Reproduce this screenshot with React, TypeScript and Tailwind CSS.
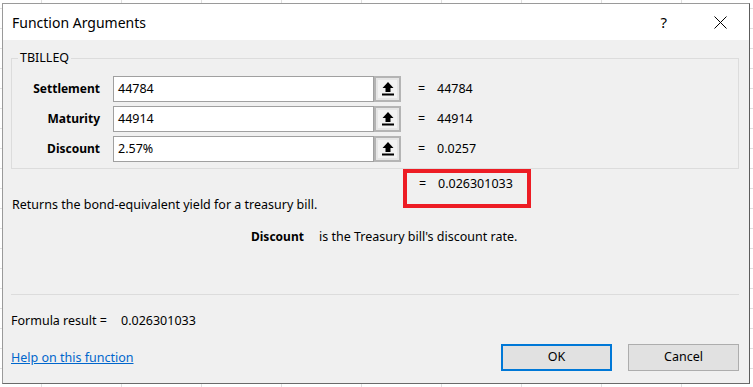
import React from "react";

const font = { fontFamily: '"Noto Sans", "Segoe UI", Arial, sans-serif' };

function UploadIcon() {
  return (
    <svg width="12" height="14" viewBox="0 0 12 14">
      <polygon points="6,0 0.5,6 3.5,6 3.5,10 8.5,10 8.5,6 11.5,6" fill="#000" />
      <rect x="0" y="11.5" width="12" height="2" fill="#000" />
    </svg>
  );
}

function ArgRow({ label, value, result }: { label: string; value: string; result: string }) {
  return (
    <div className="flex items-center h-[26px]">
      <div className="w-[88px] text-right font-bold text-[12px] text-black">{label}</div>
      <div className="ml-[13px] w-[261px] h-[26px] bg-white border border-[#a0a0a0] flex items-center pl-[4px] text-[12.5px] text-black">
        {value}
      </div>
      <div className="w-[27px] h-[26px] border-2 border-[#b4b4b4] bg-[#e6e6e6] flex items-center justify-center">
        <div className="w-[19px] h-[18px] bg-[#f3f3f3] flex items-center justify-center">
          <UploadIcon />
        </div>
      </div>
      <div className="ml-[17px] w-[19px] text-[12.5px] text-black">=</div>
      <div className="text-[12.5px] text-black">{result}</div>
    </div>
  );
}

export default function App() {
  return (
    <div
      className="w-[753px] h-[387px] overflow-hidden bg-white pt-[3px] pl-[2px] bg-[linear-gradient(to_right,#e0e0e0_1px,transparent_1px),linear-gradient(to_bottom,#e0e0e0_1px,transparent_1px)] bg-[size:80px_20px] bg-[position:41px_8px]"
      style={font}
    >
      <div className="w-[748px] h-[381px] border border-[#9a9a9a] border-r-[#5c5c5c] border-b-[#6a6a6a] bg-[#f0f0f0] flex flex-col">
        {/* Title bar */}
        <div className="h-[36px] bg-white flex items-center pl-[9px] shrink-0">
          <div className="text-[14px] text-black">Function Arguments</div>
          <div className="ml-auto text-[15px] text-black mr-[47px]">?</div>
          <div className="mr-[22px] flex items-center">
            <svg width="13" height="13" viewBox="0 0 13 13">
              <path d="M0.5 0.5 L12.5 12.5 M12.5 0.5 L0.5 12.5" stroke="#000" strokeWidth="1" />
            </svg>
          </div>
        </div>

        {/* Body */}
        <div className="flex-1 flex flex-col pl-[8px] pr-[10px]">
          {/* Group box */}
          <div className="relative mt-[18px] h-[111px] border border-[#dcdcdc] pt-[17px] flex flex-col gap-[4px]">
            <span className="absolute left-[6px] top-[-10px] px-[2px] bg-[#f0f0f0] text-[12.5px] text-black leading-[18px]">
              TBILLEQ
            </span>
            <ArgRow label="Settlement" value="44784" result="44784" />
            <ArgRow label="Maturity" value="44914" result="44914" />
            <ArgRow label="Discount" value="2.57%" result="0.0257" />
          </div>

          {/* Result row */}
          <div className="relative h-[24px] pt-[6px] flex items-center">
            <div className="ml-[408px] w-[19px] text-[12.5px] text-black leading-[18px]">=</div>
            <div className="text-[12.5px] text-black leading-[18px]">0.026301033</div>
            <div className="absolute left-[392px] top-0 w-[128px] h-[39px] border-4 border-[#ed1c24]" />
          </div>

          <div className="mt-[3px] text-[12.5px] text-black leading-[18px] pl-[1px]">
            Returns the bond-equivalent yield for a treasury bill.
          </div>

          <div className="mt-[14px] flex text-[12.5px] leading-[18px] text-black pl-[240px]">
            <span className="font-bold text-[12px] w-[68px]">Discount</span>
            <span>is the Treasury bill's discount rate.</span>
          </div>

          <div className="mt-[48px] h-px bg-[#dcdcdc]" />

          <div className="mt-[17px] flex text-[12.5px] leading-[18px] text-black">
            <span className="w-[110px]">Formula result =</span>
            <span>0.026301033</span>
          </div>

          <div className="mt-[14px] flex items-center">
            <a className="text-[12.5px] text-[#0066cc] underline leading-[18px]" href="#">
              Help on this function
            </a>
            <button className="ml-auto w-[111px] h-[27px] border-2 border-[#0078d7] bg-[#e1e1e1] text-[12.5px] text-black">
              OK
            </button>
            <button className="ml-[16px] w-[111px] h-[27px] border border-[#adadad] bg-[#e1e1e1] text-[12.5px] text-black">
              Cancel
            </button>
          </div>
        </div>
      </div>
    </div>
  );
}
